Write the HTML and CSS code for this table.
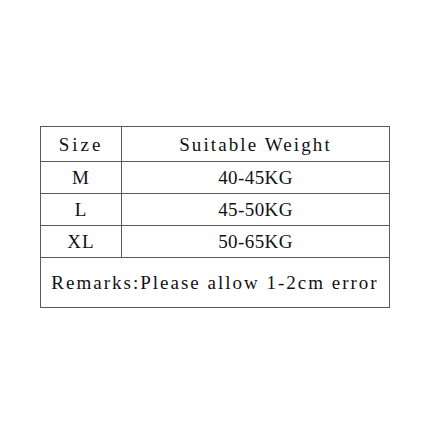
FILE: index.html
```html
<!DOCTYPE html>
<html>
<head>
<meta charset="utf-8">
<link rel="stylesheet" href="styles.css">
</head>
<body>
<div class="page">
  <table class="size-table">
    <tr class="head"><td class="c1 size-label">Size</td><td>Suitable Weight</td></tr>
    <tr class="row"><td class="c1">M</td><td>40-45KG</td></tr>
    <tr class="row"><td class="c1">L</td><td>45-50KG</td></tr>
    <tr class="row"><td class="c1">XL</td><td>50-65KG</td></tr>
    <tr class="remarks"><td colspan="2">Remarks:Please allow 1-2cm error</td></tr>
  </table>
</div>
</body>
</html>
```

FILE: styles.css
```css
html, body {
  margin: 0;
  padding: 0;
  background: #ffffff;
}
.page {
  width: 430px;
  height: 430px;
  padding-top: 126px;
  padding-left: 40px;
  box-sizing: border-box;
}
.size-table {
  border-collapse: collapse;
  width: 350px;
  font-family: "Liberation Serif", "DejaVu Serif", serif;
  font-size: 19px;
  color: #111111;
}
.size-table td {
  border: 1px solid #5a5a5a;
  text-align: center;
  padding: 0;
  line-height: 1;
}
.size-table .c1 {
  width: 80px;
}
.head td {
  height: 34px;
  letter-spacing: 2.1px;
}
.head .size-label {
  letter-spacing: 3px;
}
.row td {
  height: 31px;
  letter-spacing: 0.4px;
}
.row .c1 {
  letter-spacing: 1px;
}
.remarks td {
  height: 49px;
  letter-spacing: 2px;
}
```
